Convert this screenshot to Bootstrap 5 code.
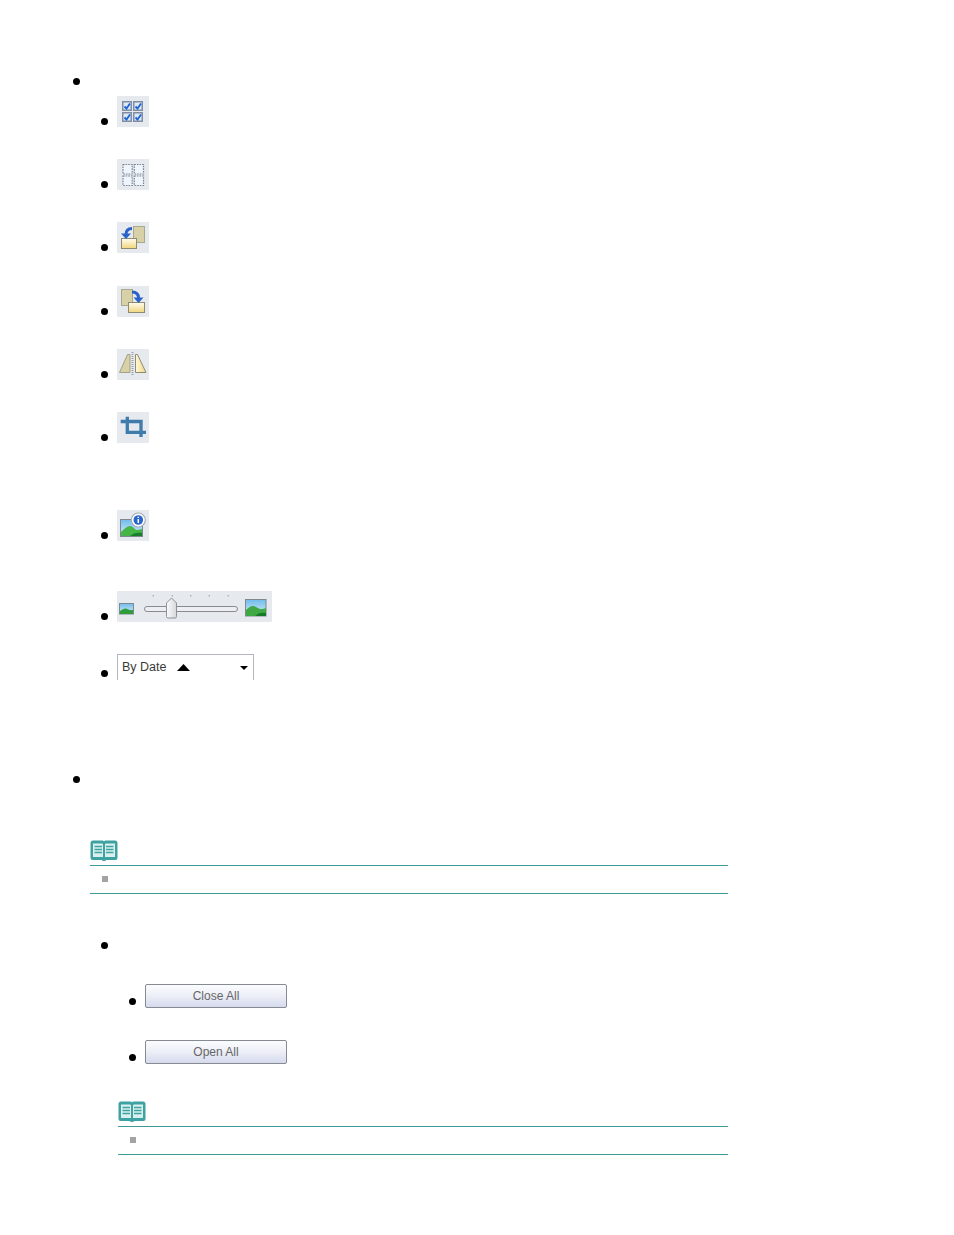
<!DOCTYPE html>
<html lang="en">
<head>
<meta charset="utf-8">
<title>Thumbnail window</title>
<link rel="stylesheet" href="https://cdn.jsdelivr.net/npm/bootstrap@5.3.0/dist/css/bootstrap.min.css">
<style>
body{background:#fff;color:#000;font-family:"Liberation Sans",Arial,sans-serif;font-size:16px;line-height:20px;margin:0}
.doc-wrap{padding-top:71px;height:1235px;overflow:hidden}
.tree,.tree ul{list-style:none;margin:0;padding:0}
.tree{padding-left:90px;width:728px}
.tree ul{padding-left:27px}
.tree li{position:relative}
.tree li::before{content:"";position:absolute;left:-16px;top:7px;width:7px;height:7px;border-radius:50%;background:#000}
.tree>li::before{left:-17px}
.tree li.no-dot::before{display:none}
.tree .icon-rows>li::before{top:22px}
.tree .icon-rows>li.sort-row::before{top:16px}
.tree .sub-buttons>li::before{top:14px}
.tree svg{display:inline-block;vertical-align:baseline}
.soft-pic{filter:blur(.35px)}
.tree .icon-rows{margin-top:5px}
.icon-rows>li{height:63.2px;line-height:31px}
.icon-rows>li.tall-crop{height:98px}
.icon-rows>li.tall-info{height:81px}
.icon-rows>li.tall-slider{height:63px}
.icon-rows>li.sort-row{height:115px;line-height:26px}
.sort-box{display:inline-block;overflow:hidden;width:137px;height:26px;background:#fff;border:1px solid #b4b8be;border-bottom:0;padding:4px 5px 0 4px;font-size:12.5px;line-height:16px;color:#3a3a3a}
.sort-up{margin:5px 0 0 11px}
.sort-down{margin:7px 0 0 auto}
.second-top{height:20px}
.note-glyph{height:25px}
.tree svg.note-svg{display:block}
.note-body{border-top:1px solid #3f9a97;border-bottom:1px solid #3f9a97;height:29px;padding:10px 0 0 12px}
.note-sq{display:block;width:6px;height:6px;background:#a3a3a3}
.note-top{margin-top:51px}
.tree.collapse-row{margin-top:41px}
.inner-note{margin-left:1px}
.tree .sub-buttons{margin-top:29px;padding-left:28px}
.sub-buttons>li{height:56px;line-height:24px}
.sub-buttons>li:last-child{height:61px}
.gray-btn{display:block;overflow:hidden;width:142px;height:24px;padding:0;border:1px solid #868a92;border-radius:2px;background:linear-gradient(#fbfcfe,#eef0f8 45%,#d5daec);color:#666;font-size:12px;line-height:23px;text-align:center}
</style>
</head>
<body>
<div class="doc-wrap">
<ul class="tree">
  <li>&nbsp;
    <ul class="icon-rows">
      <li><svg class="soft-pic" width="32" height="31" viewBox="0 0 32 31"><rect width="32" height="31" fill="#e6e9ee"/><g fill="#dfe9f5" stroke="#7f8da2" stroke-width="1.500"><rect x="5.750" y="5.750" width="8.500" height="8.500"/><rect x="16.750" y="5.750" width="8.500" height="8.500"/><rect x="5.750" y="16.750" width="8.500" height="8.500"/><rect x="16.750" y="16.750" width="8.500" height="8.500"/></g><g fill="none" stroke="#1c63d6" stroke-width="1.800"><path d="M7.500 10.500l2 2 3.500-5"/><path d="M18.500 10.500l2 2 3.500-5"/><path d="M7.500 21.500l2 2 3.500-5"/><path d="M18.500 21.500l2 2 3.500-5"/></g></svg></li>
      <li><svg class="soft-pic" width="32" height="31" viewBox="0 0 32 31"><rect width="32" height="31" fill="#e6e9ee"/><g fill="#eef6fc" stroke="#7f8496" stroke-width="1.200" stroke-dasharray="1.600 1"><rect x="6" y="5.500" width="9.200" height="9.500"/><rect x="17.300" y="5.500" width="9.200" height="9.500"/><rect x="6" y="17" width="9.200" height="9.500"/><rect x="17.300" y="17" width="9.200" height="9.500"/></g></svg></li>
      <li><svg class="soft-pic" width="32" height="31" viewBox="0 0 32 31"><defs><linearGradient id="pg1" x1="0" y1="0" x2="0" y2="1"><stop offset="0" stop-color="#fffdf0"/><stop offset="1" stop-color="#f1d67c"/></linearGradient></defs><rect width="32" height="31" fill="#e6e9ee"/><rect x="16.500" y="4.500" width="11" height="16" fill="#d8d1a8" stroke="#a9a78c"/><rect x="4.500" y="16.500" width="15" height="10" fill="url(#pg1)" stroke="#8e8b70"/><path d="M15 6.500c-4 0-6 2-6 6" fill="none" stroke="#2a62c9" stroke-width="3"/><path d="M4 11.500h10l-5 5.500z" fill="#2a62c9"/></svg></li>
      <li><svg class="soft-pic" width="32" height="31" viewBox="0 0 32 31"><rect width="32" height="31" fill="#e6e9ee"/><rect x="4.500" y="3.500" width="11" height="16" fill="#d8d1a8" stroke="#a9a78c"/><rect x="11.500" y="16.500" width="16" height="10" fill="url(#pg1)" stroke="#8e8b70"/><path d="M15 6c4 0 6.500 2 6.500 6" fill="none" stroke="#2a62c9" stroke-width="3"/><path d="M16.500 11.500h10l-5 5.500z" fill="#2a62c9"/></svg></li>
      <li><svg class="soft-pic" width="32" height="31" viewBox="0 0 32 31"><defs><linearGradient id="ya" x1="0" y1="0" x2="1" y2="0"><stop offset="0" stop-color="#fff8d8"/><stop offset="1" stop-color="#f0d68a"/></linearGradient></defs><rect width="32" height="31" fill="#e6e9ee"/><path d="M2.500 23.500L10.500 5.500h2.500v18z" fill="#d8d1a8" stroke="#a3a186"/><path d="M18.500 5.500h2l8.500 18h-10.500z" fill="url(#ya)" stroke="#8e8b70"/><path d="M15.500 3v24" stroke="#9aa0aa" stroke-width="2" stroke-dasharray="1 1"/></svg></li>
      <li class="tall-crop"><svg class="soft-pic" width="32" height="31" viewBox="0 0 32 31"><rect width="32" height="31" fill="#e6e9ee"/><path d="M3.700 9.500h22M10.300 4.700v15.700h18.700M24 8v17" fill="none" stroke="#3f7cab" stroke-width="3.300"/></svg></li>
      <li class="tall-info"><svg class="soft-pic" width="32" height="31" viewBox="0 0 32 31"><defs><linearGradient id="sk" x1="0" y1="0" x2="0" y2="1"><stop offset="0" stop-color="#6fbcec"/><stop offset="1" stop-color="#dceef8"/></linearGradient></defs><rect width="32" height="31" fill="#e6e9ee"/><rect x="3.500" y="9.500" width="22" height="17" fill="url(#sk)" stroke="#7d8890"/><path d="M4 26v-4c3-3 6-6 9-6s5 4 7 4 4-1 5-1v7z" fill="#46b548"/><path d="M13 26c3-3 8-4 12-3v3z" fill="#167f2b"/><circle cx="21.300" cy="10" r="7" fill="#fff" stroke="#a6adb8" stroke-width="1.200"/><circle cx="21.300" cy="10" r="4.800" fill="#2b67c8"/><path d="M21.300 6.700v1.400M21.300 9v4" stroke="#fff" stroke-width="1.500"/></svg></li>
      <li class="tall-slider"><svg class="soft-pic" width="155" height="31" viewBox="0 0 155 31"><defs><linearGradient id="th" x1="0" y1="0" x2="1" y2="0"><stop offset="0" stop-color="#fbfbfb"/><stop offset="1" stop-color="#d5d8dc"/></linearGradient></defs><rect width="155" height="31" fill="#e6e9ee"/><g fill="#b0b4bb"><rect x="35.500" y="4" width="1.500" height="1.500"/><rect x="54.500" y="4" width="1.500" height="1.500"/><rect x="73" y="4" width="1.500" height="1.500"/><rect x="91.500" y="4" width="1.500" height="1.500"/><rect x="110.500" y="4" width="1.500" height="1.500"/></g><rect x="2.500" y="12.500" width="14" height="10.500" fill="url(#sk)" stroke="#7d8890"/><path d="M3 23v-3c3-2 5-3 7-2s4 1 6 1v4z" fill="#2f9d3a"/><rect x="27.500" y="15.500" width="93" height="5" rx="2.500" fill="#eceef1" stroke="#868b94"/><path d="M49.500 12l5-5 5 5v13.500q0 1.500-1.500 1.500h-7q-1.500 0-1.500-1.500z" fill="url(#th)" stroke="#8d929a"/><rect x="128.500" y="8.500" width="20.500" height="16.500" fill="url(#sk)" stroke="#7d8890"/><path d="M129 25v-6c4-4 7-5 10-3s6 3 10 1v8z" fill="#3ea944"/><path d="M138 25c3-3 7-4 11-3v3z" fill="#147a2a"/></svg></li>
      <li class="sort-row"><div class="sort-box"><div class="d-flex align-items-start"><span>By Date</span><svg class="sort-up" width="13" height="7" viewBox="0 0 13 7"><path d="M6.500 0L13 7H0z" fill="#000"/></svg><svg class="sort-down" width="8" height="4" viewBox="0 0 8 4"><path d="M0 0h8L4 4z" fill="#000"/></svg></div></div></li>
    </ul>
  </li>
  <li class="second-top">&nbsp;</li>
</ul>
<div class="tree">
  <div class="note-top">
    <div class="note-glyph"><svg class="note-svg soft-pic" width="28" height="22" viewBox="0 0 28 22"><path d="M.5 3q0-2.500 2.500-2.500h9q2 0 2 1 0-1 2-1h9q2.500 0 2.500 2.500v15q0 2-2 2H16.500q-1 1-2.500 1t-2.500-1H2.500q-2 0-2-2z" fill="#3fa2a2"/><path d="M3 3.500h9q1 0 1 1V17H3zM15 4.500q0-1 1-1h9V17H15z" fill="#d9f0ee"/><path d="M4.500 6.500H12M4.500 9.500H12M4.500 12.500H12M16 6.500h7.500M16 9.500h7.500M16 12.500h7.500" stroke="#3fa2a2" stroke-width="1.400"/></svg></div>
    <div class="note-body"><span class="note-sq"></span></div>
  </div>
</div>
<ul class="tree collapse-row">
  <li class="no-dot">
    <ul>
      <li>&nbsp;
        <ul class="sub-buttons">
          <li><button type="button" class="btn gray-btn">Close All</button></li>
          <li><button type="button" class="btn gray-btn">Open All</button></li>
        </ul>
        <div class="inner-note">
          <div class="note-glyph"><svg class="note-svg soft-pic" width="28" height="22" viewBox="0 0 28 22"><path d="M.5 3q0-2.500 2.500-2.500h9q2 0 2 1 0-1 2-1h9q2.500 0 2.500 2.500v15q0 2-2 2H16.500q-1 1-2.500 1t-2.500-1H2.500q-2 0-2-2z" fill="#3fa2a2"/><path d="M3 3.500h9q1 0 1 1V17H3zM15 4.500q0-1 1-1h9V17H15z" fill="#d9f0ee"/><path d="M4.500 6.500H12M4.500 9.500H12M4.500 12.500H12M16 6.500h7.500M16 9.500h7.500M16 12.500h7.500" stroke="#3fa2a2" stroke-width="1.400"/></svg></div>
          <div class="note-body"><span class="note-sq"></span></div>
        </div>
      </li>
    </ul>
  </li>
</ul>
</div>
<script src="https://cdn.jsdelivr.net/npm/bootstrap@5.3.0/dist/js/bootstrap.bundle.min.js"></script>
</body>
</html>
